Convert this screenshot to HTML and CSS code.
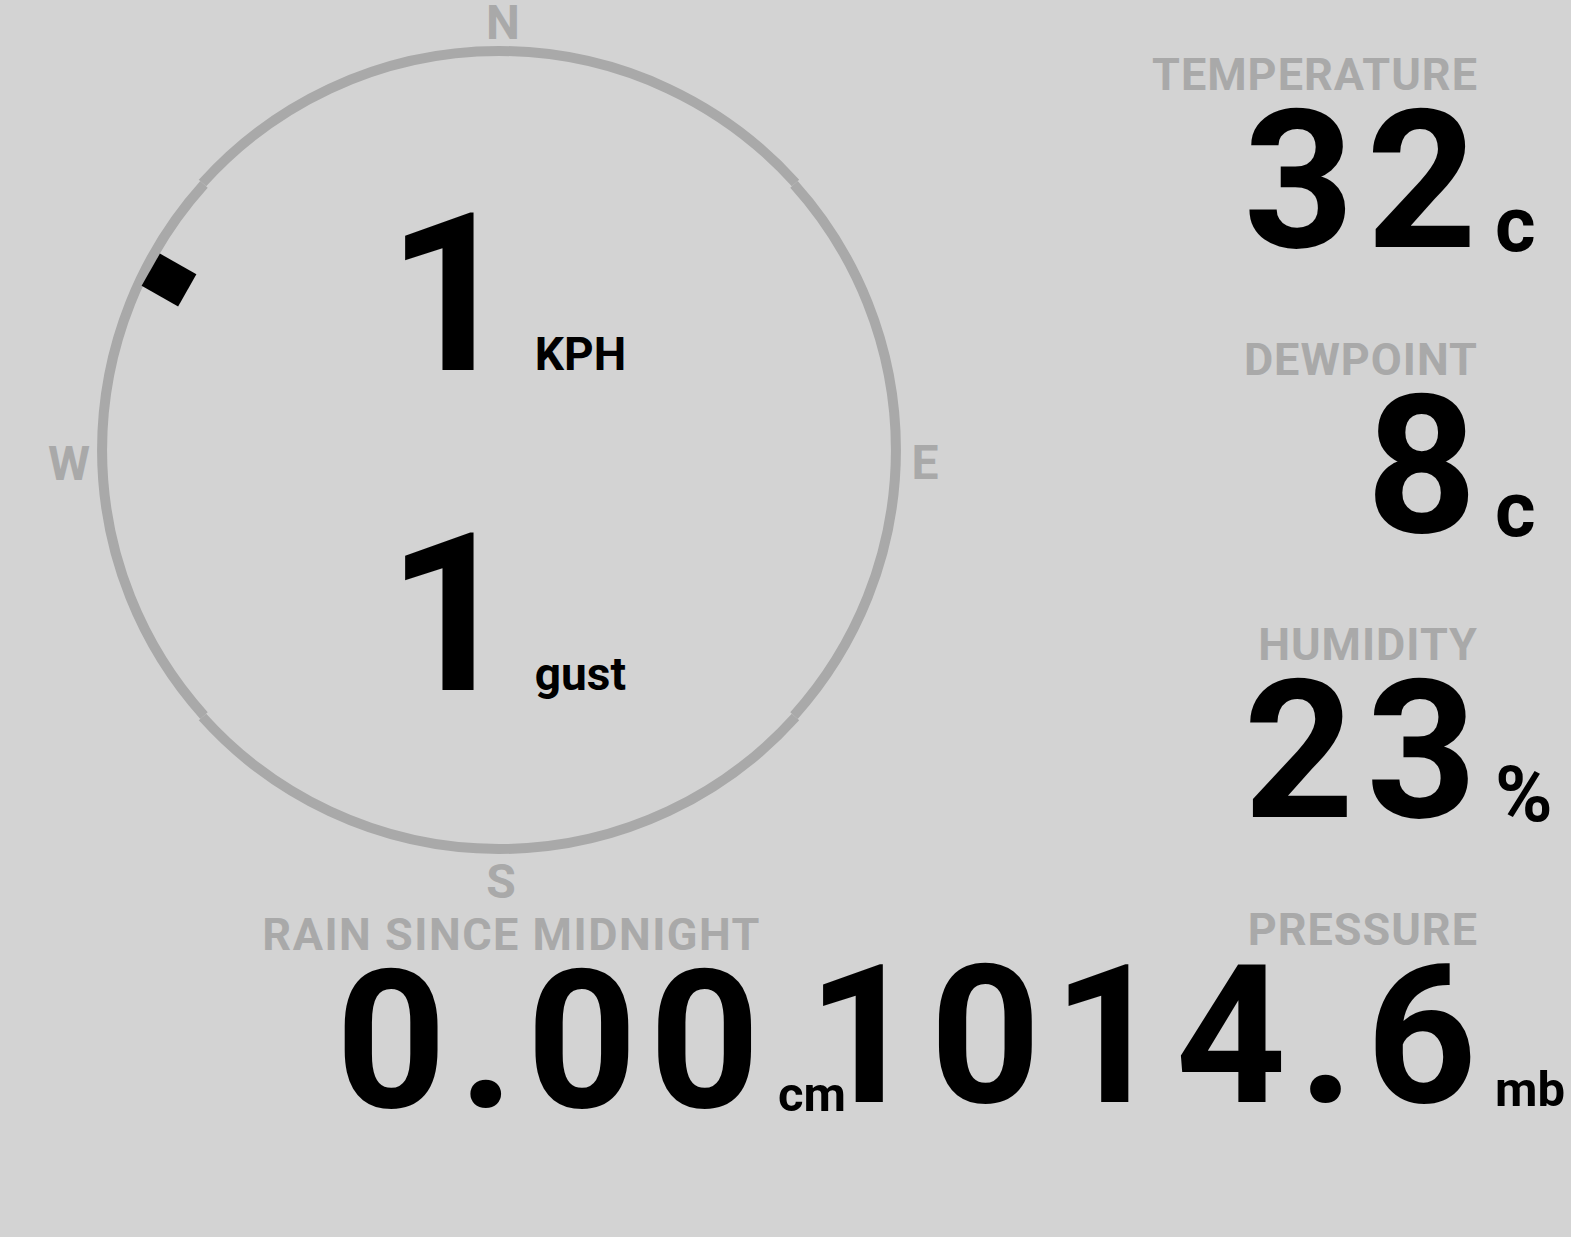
FILE: index.html
```html
<!DOCTYPE html>
<html lang="en">
<head>
    <meta charset="UTF-8">
    <meta name="viewport" content="width=device-width, initial-scale=1.0">
    <title>Weather Station</title>
    <link rel="stylesheet" href="styles.css">
</head>
<body>
    <div class="station">
        <!-- Wind: compass rose with speed and gust -->
        <section class="wind">
            <div class="compass">
                <svg class="rose" width="1000" height="912" viewBox="0 0 1000 912">
                    <g class="ring">
                        <path d="M202.5 183 A399 399 0 0 1 795.5 183"/>
                        <path d="M794 184.4 A397 397 0 0 1 794 715.6"/>
                        <path d="M795.5 717 A399 399 0 0 1 202.5 717"/>
                        <path d="M204 715.6 A397 397 0 0 1 204 184.4"/>
                    </g>
                    <rect class="vane" x="-21" y="-18.5" width="42" height="37" transform="translate(169 280) rotate(29.6)"/>
                    <text class="dir" x="503" y="39">N</text>
                    <text class="dir" x="925" y="479">E</text>
                    <text class="dir" x="501" y="898">S</text>
                    <text class="dir" x="69" y="480">W</text>
                </svg>
                <div class="speeds">
                    <div class="speed"><span class="speed-num">1</span><span class="speed-unit">KPH</span></div>
                    <div class="speed"><span class="speed-num">1</span><span class="speed-unit">gust</span></div>
                </div>
            </div>

            <div class="stat stat-rain">
                <div class="stat-label">RAIN SINCE MIDNIGHT</div>
                <div class="stat-value"><span class="num">0.00</span><span class="unit unit-sm">cm</span></div>
            </div>
        </section>

        <!-- Readings -->
        <section class="readings">
            <div class="stat">
                <div class="stat-label">TEMPERATURE</div>
                <div class="stat-value"><span class="num">32</span><span class="unit unit-c">c</span></div>
            </div>
            <div class="stat">
                <div class="stat-label">DEWPOINT</div>
                <div class="stat-value"><span class="num">8</span><span class="unit unit-c">c</span></div>
            </div>
            <div class="stat">
                <div class="stat-label">HUMIDITY</div>
                <div class="stat-value"><span class="num">23</span><span class="unit unit-pct">%</span></div>
            </div>
            <div class="stat">
                <div class="stat-label">PRESSURE</div>
                <div class="stat-value"><span class="num">1014.6</span><span class="unit unit-sm">mb</span></div>
            </div>
        </section>
    </div>
</body>
</html>
```

FILE: styles.css
```css
body {
    margin: 0;
    background: #d3d3d3;
    color: #000;
    font-family: Roboto, "Liberation Sans", sans-serif;
    font-weight: 700;
    overflow: hidden;
}

.station {
    display: flex;
    width: 1571px;
    height: 1237px;
}

.wind {
    width: 1000px;
    flex: none;
}

.compass {
    display: grid;
}

.compass > * {
    grid-area: 1 / 1;
}

.rose {
    display: block;
}

.ring path {
    fill: none;
    stroke: #a9a9a9;
    stroke-width: 10;
}

.vane {
    fill: #000;
}

.dir {
    fill: #a9a9a9;
    font-family: Roboto, "Liberation Sans", sans-serif;
    font-size: 48px;
    font-weight: 700;
    text-anchor: middle;
}

.speeds {
    padding: 135px 0 0 387px;
}

.speed {
    font-size: 221px;
    line-height: 320px;
    height: 320px;
    white-space: nowrap;
}

.speed-unit {
    font-size: 46px;
    margin-left: 21px;
}

.stat-label {
    font-size: 45px;
    line-height: 45px;
    color: #a9a9a9;
    text-align: right;
    white-space: nowrap;
    letter-spacing: 1px;
    margin-right: -1px;
}

.stat-rain .stat-label {
    letter-spacing: 1.5px;
}

.stat-value {
    display: flex;
    justify-content: flex-end;
    align-items: baseline;
    height: 150px;
    margin-top: 9px;
    font-size: 193px;
    line-height: 150px;
    white-space: nowrap;
}

.num {
    flex: none;
    letter-spacing: 12px;
    margin-right: -12px;
}

.unit {
    flex: none;
    width: 0;
    margin: 0 -18px 0 18px;
    line-height: 1;
    transform: translateY(4px);
}

.unit-c {
    font-size: 78px;
}

.unit-pct {
    font-size: 78px;
}

.unit-sm {
    font-size: 49px;
}

.stat-rain {
    width: 760px;
}

.readings {
    flex: 1;
    min-width: 0;
    padding: 52px 94px 0 0;
}

.readings .stat + .stat {
    margin-top: 81px;
}
```
